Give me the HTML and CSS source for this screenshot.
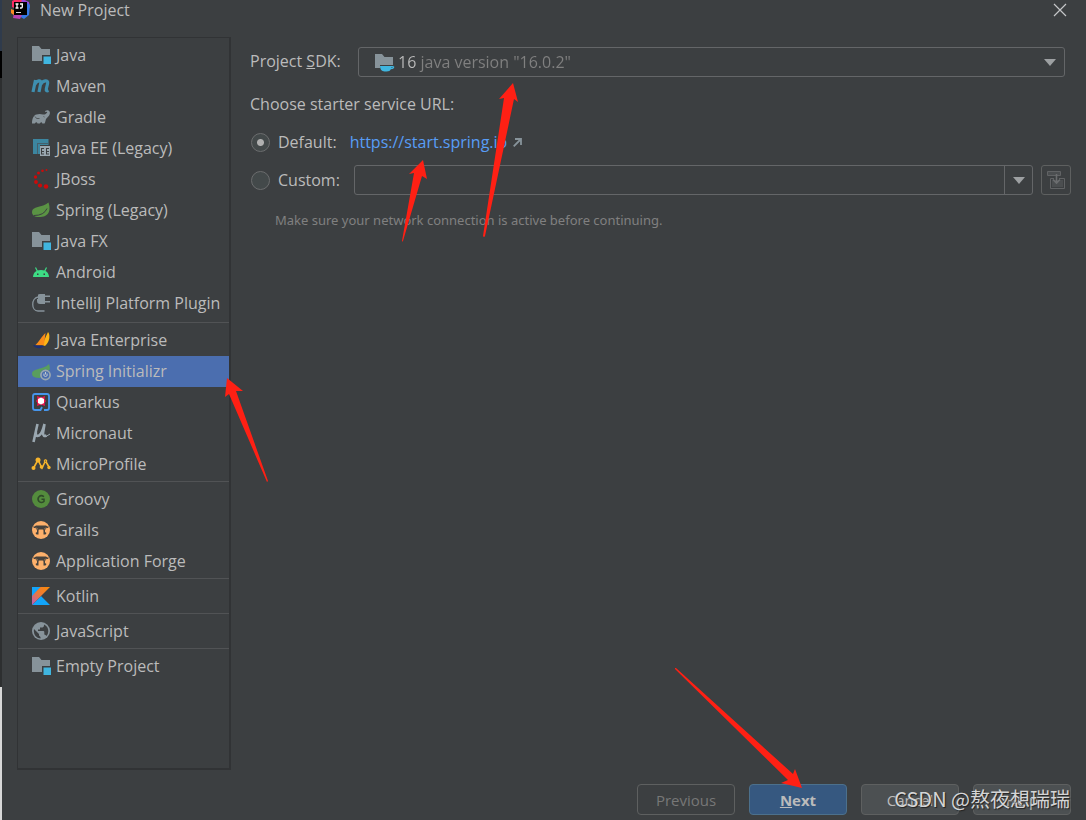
FILE: index.html
```html
<!DOCTYPE html>
<html lang="en">
<head>
<meta charset="utf-8">
<title>New Project</title>
<link rel="stylesheet" href="styles.css">
</head>
<body>
<svg class="defs" aria-hidden="true">
  <defs>
    <symbol id="folder" viewBox="0 0 18 18" overflow="visible"><path fill="#87939a" d="M0 0h7l2.500 3H18v6H10v6H0z"/><path fill="#40b6e0" d="M11.500 10.500h7.500v7.500h-7.500z"/></symbol>
    <symbol id="grails" viewBox="0 0 18 18"><circle cx="9" cy="9" r="9" fill="#fdb06b"/><path fill="#46423d" d="M4 4.500h10l1.500 1H17L16 7h-1.500l-1.500 2v2l1.500 1-1 1.500h-2v-4l-.7-1H7.200l-.7 1v4h-2l-1-1.500L5 11V9L3.500 7H2L1 5.500h1.500z"/><path stroke="#fdb06b" stroke-width=".6" d="M4 6.500l2 2M14 6.500l-2 2"/></symbol>
  </defs>
</svg>
<div class="window">
  <div class="backdrop"></div>
  <div class="dialog">
    <header class="titlebar">
      <svg class="logo" viewBox="0 0 20 20"><path fill="#fc2b62" d="M1 1 7-2l7 2 2 3-6 8-9-4z"/><path fill="#9b45d8" d="M11-1l7 3 1 5-4 5-6-4z"/><path fill="#3478e5" d="M16 3l3 2-1 10-5 4-5-3z"/><path fill="#fb8a21" d="M0 9l5 2-1 5-4-3z"/><path fill="#b542b4" d="M3 13l8 2-2 4-7-1z"/><path d="M3 2h13v13H3z"/><path fill="none" stroke="#fff" stroke-width="1.300" d="M4.500 4h3M6 4v4M4.500 8h3M9 4h3M11.300 4v3q0 1-1.200 1H9"/><path fill="#ddd" d="M5 12h5v1H5z"/></svg>
      <h1 class="title">New Project</h1>
      <button class="close" aria-label="Close"><svg viewBox="0 0 12 12"><path d="M0 0l12 12M12 0L0 12" stroke="#c4c6c8" stroke-width="1.200"/></svg></button>
    </header>
    <div class="body">
      <nav class="sidebar" aria-label="Project type">
        <ul class="group">
          <li><button class="item"><svg class="icon"><use href="#folder"/></svg>Java</button></li>
          <li><button class="item"><svg class="icon" viewBox="0 0 18 18"><path fill="none" stroke="#3e8fb0" stroke-width="3.200" d="M3.500 3L1 15M2.700 7.500C5 3 9.500 2.500 8.700 6.500L7 15M8.600 7.500C11 3 16.500 2.500 15.600 6.500L14.300 12q-.5 2.500 2.200 1.500"/></svg>Maven</button></li>
          <li><button class="item"><svg class="icon" viewBox="0 0 18 18"><path fill="#87939a" d="M0 15.500C0 11 1.500 7 4.500 6.500 7 5.500 9 6 11 6.500c2 .3 3-.7 4.300-2-.3-1-1.300-.9-2.300-.3-.3-1.500 1.500-2.300 3-1.900 2.500.7 2.500 4 .5 6L14 11q-1 4-1.500 4.500H10.300q-.6-2.500-2.500 0H5.500q-.9-2.500-2.700 0z"/><path fill="none" stroke="#3c3f41" stroke-width=".7" d="M3 8.500q1 3 4.500 2M11.500 8.500l1 .5"/></svg>Gradle</button></li>
          <li><button class="item"><svg class="icon" viewBox="0 0 18 18"><path fill="#3c86a0" d="M1 0h15.500v6H8v9H1z"/><path fill="#45606c" d="M5 4h11v1H6v10H5z"/><path fill="#9aa7b0" d="M8 7h10v10H8z"/><path stroke="#3c3f41" d="M9 9.500h3M14 9.500h3M9.500 9v6M14.500 9v6M9 12.500h3M14 12.500h3M9 15h3M14 15h3"/></svg>Java EE (Legacy)</button></li>
          <li><button class="item"><svg class="icon" viewBox="0 0 18 18" fill="#cc0a0a"><circle cx="14.500" cy="0" r="1"/><circle cx="10.500" cy=".8" r="1.300"/><circle cx="6.500" cy="3" r="1.500"/><circle cx="3.500" cy="7" r="1.700"/><circle cx="4" cy="12" r="1.900"/><circle cx="8" cy="15.500" r="2.100"/><circle cx="14" cy="16.500" r="2.300"/></svg>JBoss</button></li>
          <li><button class="item"><svg class="icon" viewBox="0 0 18 18"><path fill="#5a9344" d="M16.500 1.500c2 6 2 14-8 14.500-6 .5-8.500-2-8.500-5C0 5 10 7 16.500 1.500z"/><path fill="none" stroke="#3c3f41" d="M2 14.500q10 0 13-7"/></svg>Spring (Legacy)</button></li>
          <li><button class="item"><svg class="icon"><use href="#folder"/></svg>Java FX</button></li>
          <li><button class="item"><svg class="icon" viewBox="0 0 18 18"><path fill="#3ddc84" d="M1 14c.3-4 2.500-7 8-7s7.700 3 8 7z"/><path stroke="#3ddc84" stroke-width="1.200" d="M5.500 8.500l-2-4M12.500 8.500l2-4"/><path fill="#3c3f41" d="M5 10.500h1.500V12H5zM11.500 10.500H13V12h-1.500z"/></svg>Android</button></li>
          <li><button class="item"><svg class="icon" viewBox="0 0 18 18"><path fill="#87939a" d="M6 1q0-1 2-1h5v10H8q-3 0-3-3V5h1zM13 1.500h5V3h-5zM13 7h5v1.500h-5z"/><path fill="none" stroke="#87939a" stroke-width="1.300" d="M6 3C-1 4-1 17 6 17h6.500"/></svg>IntelliJ Platform Plugin</button></li>
        </ul>
        <ul class="group">
          <li><button class="item"><svg class="icon" viewBox="0 0 18 18"><path fill="#fdb515" d="M16 1c2 2 2.500 9-3 14l-3-1z"/><path fill="#f98b18" d="M13.500 2L12 14l-9 .5C7 11 10 5 13.500 2z"/><path fill="#1c2f73" d="M1 14l12 1-4 2q-5 1-8-3z"/></svg>Java Enterprise</button></li>
          <li><button class="item selected" aria-current="true"><svg class="icon" viewBox="0 0 18 18"><path fill="#599e5e" d="M17 2c1 3 1.500 7-1 7l-8 7q-8 0-8-4C0 6 11 8 17 2z"/><circle cx="13.500" cy="13" r="5.500" fill="#4b6eaf"/><circle cx="13.500" cy="13" r="4.600" fill="none" stroke="#9aa7b0" stroke-width="1.700"/><path fill="none" stroke="#c0c8d0" d="M12 11.500q-1 3 1.500 3t1.500-3M13.500 10v2.500"/></svg>Spring Initializr</button></li>
          <li><button class="item"><svg class="icon" viewBox="0 0 18 18"><path fill="none" stroke="#4695eb" stroke-width="1.800" d="M10 14l-1.500 3H3q-2 0-2-2V3q0-2 2-2h12q2 0 2 2v12q0 2-2 2h-3"/><path fill="#f0144f" d="M5 3l4 1.500L13 3l-.5 3L14 8l-1.500 2 .5 3-4-1.500L5 13l.5-3L4 8l1.500-2z"/><path fill="#fff" d="M9 4.500l3 1.500v4l-3 1.500L6 10V6z"/></svg>Quarkus</button></li>
          <li><button class="item"><svg class="icon" viewBox="0 0 18 18"><path fill="none" stroke="#9aa7b0" stroke-width="2.600" d="M5.500 0L1.500 18M4 8q-1 5 3 3.500Q10 10 12.500 0L11 9q0 4 3.500 2.500"/><path stroke="#9aa7b0" d="M14 12.500l4-2.500"/></svg>Micronaut</button></li>
          <li><button class="item"><svg class="icon" viewBox="0 0 18 18"><path fill="none" stroke="#f6b42c" stroke-width="1.600" d="M1.500 13L6 5l4 8 3.500-7L17 12"/><g fill="#f6b42c"><circle cx="1.500" cy="13" r="2"/><circle cx="6" cy="5" r="2.500"/><circle cx="9.500" cy="12" r="1.800"/><circle cx="13.500" cy="6" r="1.800"/><circle cx="17" cy="12.500" r="1.700"/></g><circle cx="13.500" cy="6" r=".6" fill="#3c3f41"/></svg>MicroProfile</button></li>
        </ul>
        <ul class="group">
          <li><button class="item"><svg class="icon" viewBox="0 0 18 18"><circle cx="9" cy="9" r="9" fill="#548c3d"/><path fill="none" stroke="#2f4a29" stroke-width="1.500" d="M12 6.700Q9 4.500 7 6.700T7 11.500q2.500 2 5 0V9.200H9.500"/></svg>Groovy</button></li>
          <li><button class="item"><svg class="icon"><use href="#grails"/></svg>Grails</button></li>
          <li><button class="item"><svg class="icon"><use href="#grails"/></svg>Application Forge</button></li>
        </ul>
        <ul class="group">
          <li><button class="item"><svg class="icon" viewBox="0 0 18 18"><defs><linearGradient id="kt" x1="0" y1="1" x2="1" y2="0"><stop offset="0" stop-color="#b95bc0"/><stop offset=".5" stop-color="#ed7a38"/><stop offset="1" stop-color="#fb8b06"/></linearGradient></defs><path fill="#12a5fa" d="M0 0h9L0 10zM0 18l9-9 9 9z"/><path fill="url(#kt)" d="M8.500 0H18L0 18V9z"/></svg>Kotlin</button></li>
        </ul>
        <ul class="group">
          <li><button class="item"><svg class="icon" viewBox="0 0 18 18"><circle cx="9" cy="9" r="9" fill="#87939a"/><path fill="#3c3f41" d="M2 7l5 5v1.500l1.500 1.500v1.500Q2 15.500 1.800 9zM12 2.500q4.500 2 4.300 7-.2 3-1.800 4.500-.8-1.500-2.200-1.500V10q0-1-1-1H6V7.500h2V5.500h2.500Q12 5 12 3.500z"/></svg>JavaScript</button></li>
        </ul>
        <ul class="group">
          <li><button class="item"><svg class="icon"><use href="#folder"/></svg>Empty Project</button></li>
        </ul>
      </nav>
      <main class="main">
        <div class="row sdk-row">
          <label class="sdk-label" for="sdk">Project <u>S</u>DK:</label>
          <div class="sdk-box">
            <select id="sdk" class="sdk"><option>16 java version "16.0.2"</option></select>
            <svg class="sdk-icon" viewBox="0 0 20 18"><path fill="#87939a" d="M0 0h7l2.500 3H18v8H5v3H0z"/><path fill="#40b6e0" d="M5 12h12.500q2.500 0 1.500 2-1 1.500-3 1-1 2.500-4.500 2.500H9.500Q5 17 5 12z"/><path fill="#3c3f41" d="M16.500 13h1.500l-1.500 1z"/></svg>
            <svg class="arrow sdk-arrow" viewBox="0 0 12 7"><path fill="#9da0a2" d="M0 0h12L6 7z"/></svg>
          </div>
        </div>
        <p class="choose">Choose starter service URL:</p>
        <div class="row default-row">
          <input class="radio" type="radio" name="url" id="default" checked>
          <label for="default">Default:</label>
          <a class="link" href="https://start.spring.io">https://start.spring.io</a>
          <svg class="external" viewBox="0 0 9 9"><path fill="none" stroke="#87939a" stroke-width="1.800" d="M.7 8.300L7.500 1.500M2 1h6v6"/></svg>
        </div>
        <div class="row custom-row">
          <input class="radio" type="radio" name="url" id="custom">
          <label class="custom-label" for="custom">Custom:</label>
          <div class="combo">
            <input class="combo-input" type="text" aria-label="Custom URL">
            <button class="combo-button" aria-label="Show history"><svg class="arrow" viewBox="0 0 12 7"><path fill="#9da0a2" d="M0 0h12L6 7z"/></svg></button>
          </div>
          <button class="import" aria-label="Load" disabled><svg viewBox="0 0 18 18"><path fill="none" stroke="#616365" d="M.5.500h13v4H.500zM7 7.500H3.500v10h14v-10H12"/><path fill="#4b4e50" d="M1 1h12v3H1zM5 9h11v7H5z"/><path fill="none" stroke="#6b6d6f" stroke-width="1.600" d="M9.500 3v8M6 8.500l3.500 3.500L13 8.500"/></svg></button>
        </div>
        <p class="hint">Make sure your network connection is active before continuing.</p>
      </main>
    </div>
    <footer class="footer">
      <button class="button" disabled>Previous</button>
      <button class="button primary"><u>N</u>ext</button>
      <button class="button filled">Cancel</button>
      <button class="button filled">Help</button>
    </footer>
  </div>
  <svg class="annotations" viewBox="0 0 1086 820" fill="#ff2014" aria-hidden="true">
    <path d="M513 83l5 19-4-3-29 137q-1 2-2 0l21-138-5 1z"/>
    <path d="M423 160l4 19-5-3-19 65q-1 1-1 0l12-68-5 1z"/>
    <path d="M227 378l16 13-7 0 32 90-1 1-38-88-4 3z"/>
    <path d="M802 788l-21-5 7-3L675 669v-1h1l117 106 2-5z"/>
  </svg>
  <div class="watermark">CSDN @熬夜想瑞瑞</div>
</div>
</body>
</html>
```
FILE: styles.css
```css
* { box-sizing: border-box; }

body {
  margin: 0;
  background: #3c3f41;
  color: #bbbbbb;
  font: 16px/20px "Open Sans", "Noto Sans", sans-serif;
}

h1, p, ul { margin: 0; padding: 0; font: inherit; }
ul { list-style: none; }
button, input, select { font: inherit; color: inherit; }
button { padding: 0; border: 0; background: none; }

.defs { position: absolute; width: 0; height: 0; }

.window {
  position: relative;
  display: flex;
  min-height: 100vh;
  overflow: hidden;
}

.backdrop {
  width: 2px;
  background: linear-gradient(#2f3b4c 51px, #000000 51px, #000000 78px, #2d2f30 78px, #2d2f30 687px, #d8d8d8 687px);
}

.dialog {
  flex: 1;
  display: flex;
  flex-direction: column;
  padding: 0 15px 5px;
}

.titlebar {
  display: flex;
  align-items: center;
  height: 20px;
  padding-right: 5px;
}
.logo { width: 20px; height: 20px; margin: 0 9px 0 -6px; overflow: visible; }
.title { flex: 1; }
.close { display: flex; }
.close svg { width: 12px; height: 12px; overflow: visible; }

.body { flex: 1; display: flex; gap: 19px; margin: 17px 0 14px; }

.sidebar {
  width: 214px;
  border: 1px solid #313335;
  border-right-width: 2px;
  border-bottom-width: 2px;
}
.group { padding: 2px 0 1px; border-top: 1px solid #515355; }
.group:first-child { padding: 2px 0 3px; border-top: 0; }

.item {
  display: flex;
  align-items: center;
  gap: 6px;
  width: 100%;
  height: 31px;
  padding: 0 0 1px 14px;
  white-space: nowrap;
}
.selected { background: #4b6eaf; }
.icon { width: 18px; height: 18px; overflow: visible; }

.main { flex: 1; padding-top: 10px; }
.row { display: flex; align-items: center; }
.sdk-row { height: 30px; padding-right: 6px; }
.sdk-label { width: 108px; padding-bottom: 2px; }
.sdk-box { position: relative; flex: 1; }
.sdk {
  display: block;
  width: 100%;
  height: 30px;
  padding: 0 30px 0 39px;
  appearance: none;
  border: 1px solid #646668;
  border-radius: 3px;
  background: linear-gradient(90deg, #bbbbbb 59px, #808080 59px) text;
  -webkit-text-fill-color: transparent;
}
.sdk-icon { position: absolute; left: 17px; top: 7px; width: 20px; height: 18px; }
.arrow { width: 12px; height: 7px; }
.sdk-arrow { position: absolute; right: 9px; top: 12px; }

.choose { margin-top: 17px; }
.default-row { margin-top: 18px; height: 20px; }
.radio {
  appearance: none;
  width: 19px;
  height: 19px;
  margin: 0 8px 0 1px;
  border: 1px solid #6b6d6e;
  border-radius: 50%;
  background: #43494a;
}
.radio:checked { background: radial-gradient(circle, #b0b0b0 3px, #43494a 4px); }
.link { margin: 0 6px 0 13px; color: #589df6; text-decoration: none; }
.external { width: 9px; height: 9px; }

.custom-row { margin-top: 13px; }
.custom-label { width: 76px; }
.combo {
  flex: 1;
  display: flex;
  height: 30px;
  margin-right: 8px;
  border: 1px solid #646668;
  border-radius: 3px;
}
.combo-input { flex: 1; min-width: 0; border: 0; background: none; }
.combo-button {
  display: flex;
  align-items: center;
  justify-content: center;
  width: 28px;
  border-left: 1px solid #646668;
}
.import {
  display: flex;
  align-items: center;
  justify-content: center;
  width: 30px;
  height: 30px;
  border: 1px solid #5e6060;
  border-radius: 3px;
}
.import svg { width: 18px; height: 18px; }
.hint {
  margin: 15px 0 0 25px;
  color: #808080;
  font-family: "Noto Sans", sans-serif;
  font-size: 13px;
}

.footer { display: flex; justify-content: flex-end; gap: 14px; }
.button {
  width: 98px;
  height: 31px;
  border: 1px solid #5e6060;
  border-radius: 4px;
  font-size: 15px;
}
.button:disabled { color: #777777; }
.filled { background: #4c5052; }
.primary { border-color: #4c708c; background: #365880; font-weight: 700; }

.annotations { position: absolute; left: 0; top: 0; width: 100%; pointer-events: none; }
.watermark {
  position: absolute;
  right: 16px;
  bottom: 7px;
  color: #d4d5d6;
  font: 20px/28px "Noto Sans CJK SC", sans-serif;
  text-shadow: 1px 1px 1px #222222;
  pointer-events: none;
}
```
